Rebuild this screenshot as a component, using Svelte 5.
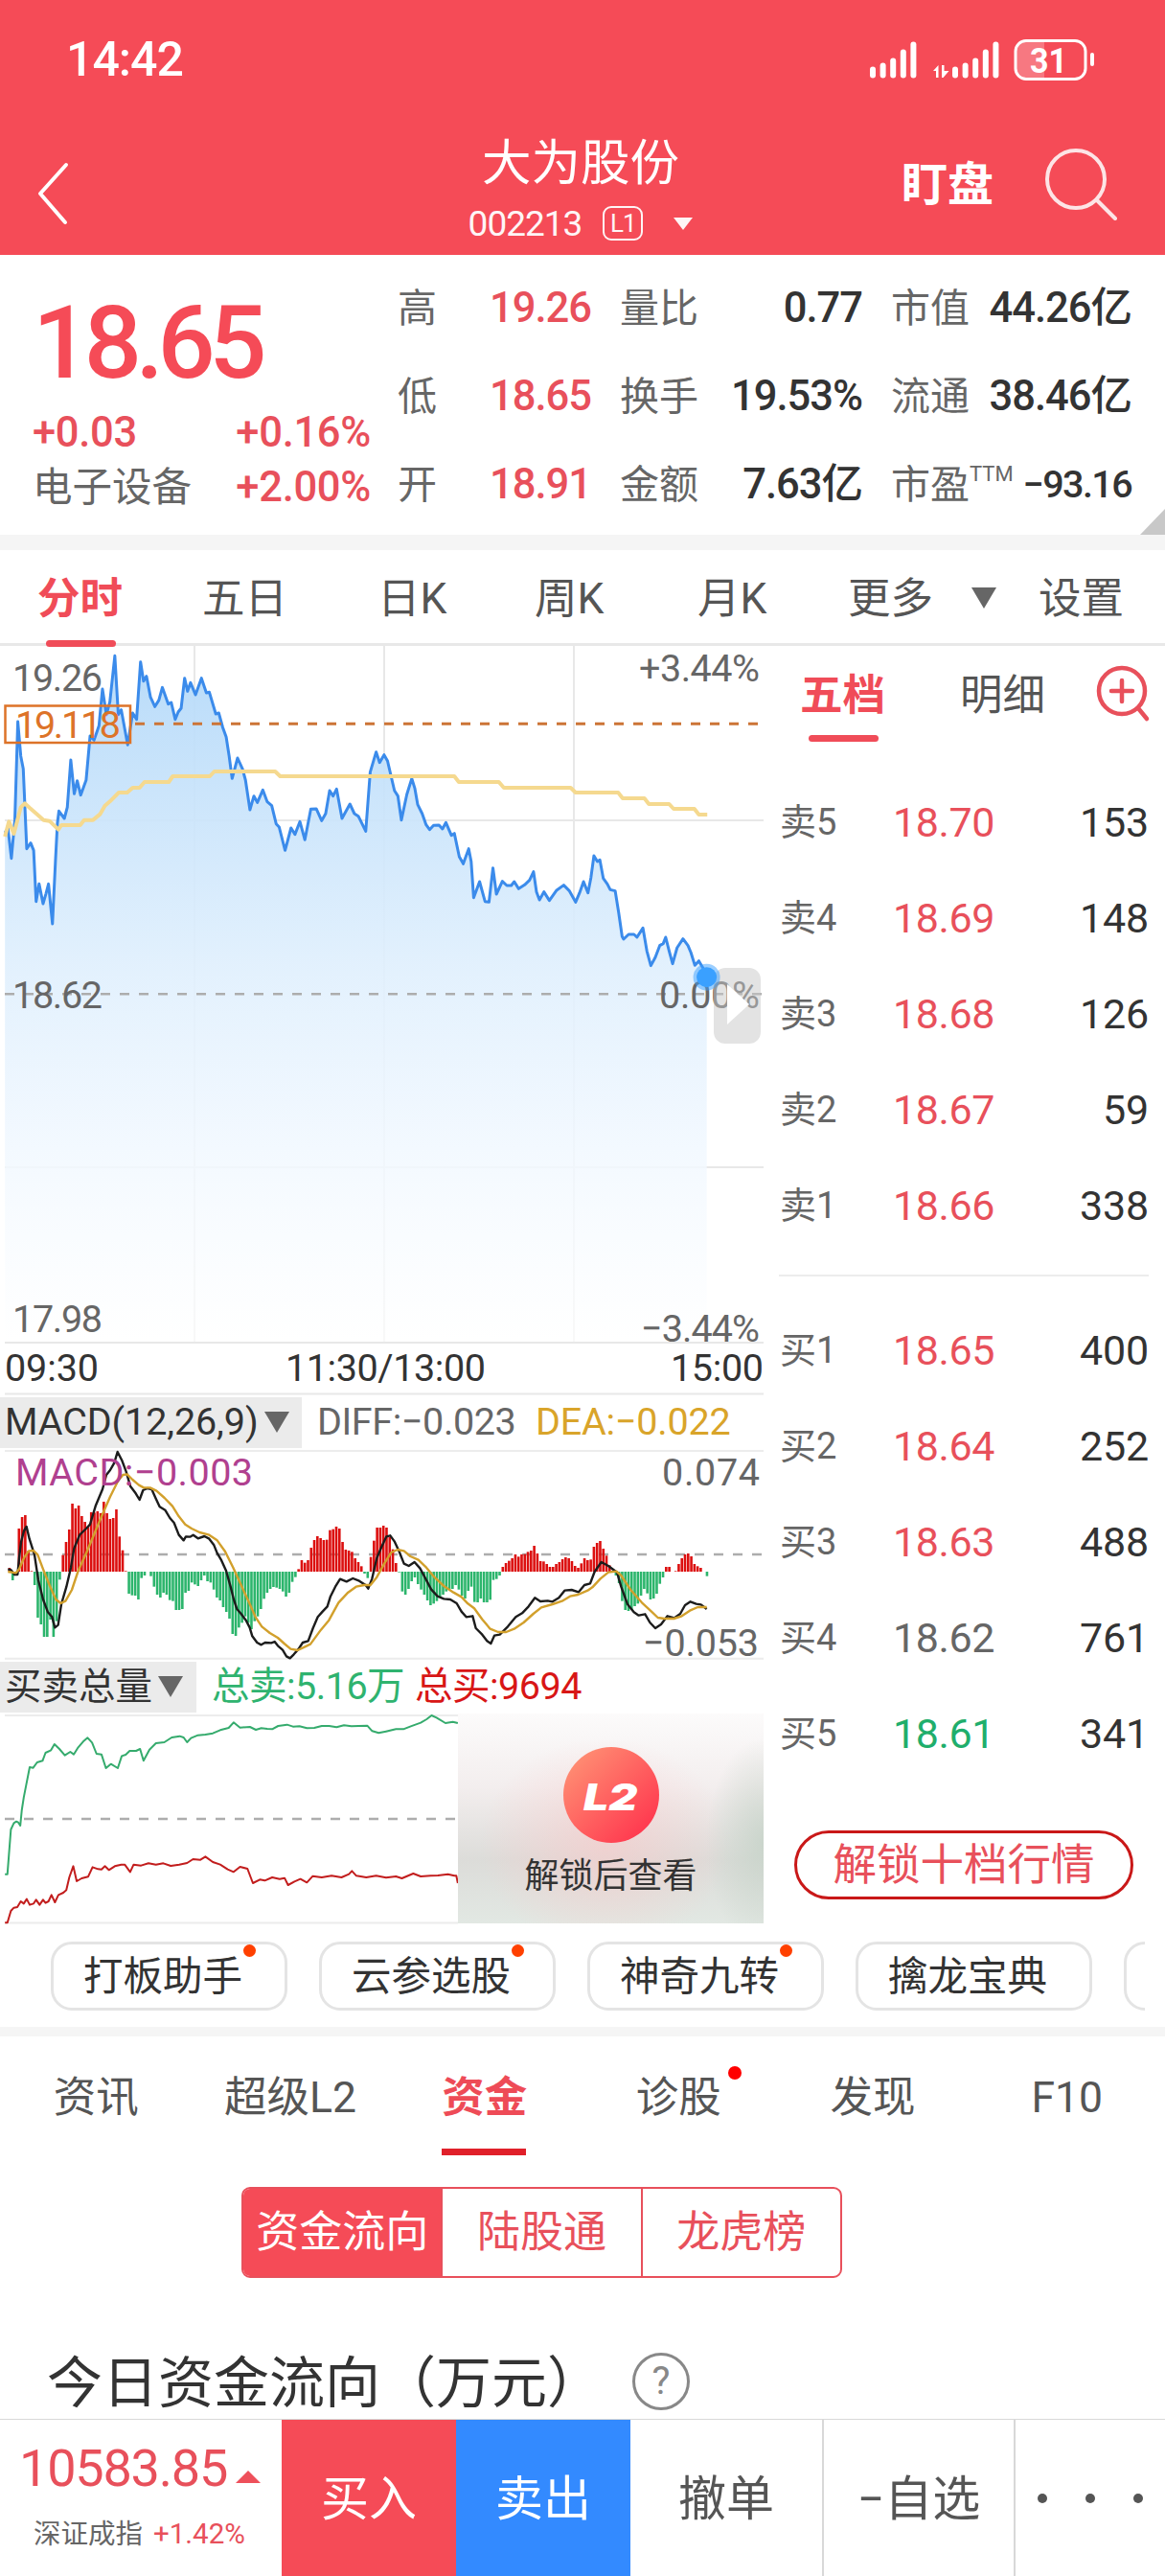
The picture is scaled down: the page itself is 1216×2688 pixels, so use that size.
<script>
    const stats = [
        { label: '高', value: '19.26', up: true },
        { label: '量比', value: '0.77' },
        { label: '市值', value: '44.26亿' },
        { label: '低', value: '18.65', up: true },
        { label: '换手', value: '19.53%' },
        { label: '流通', value: '38.46亿' },
        { label: '开', value: '18.91', up: true },
        { label: '金额', value: '7.63亿' },
        { label: '市盈', sup: 'TTM', value: '−93.16' }
    ];

    const periods = ['五日', '日K', '周K', '月K'];

    const asks = [
        { label: '卖5', price: '18.70', volume: 153 },
        { label: '卖4', price: '18.69', volume: 148 },
        { label: '卖3', price: '18.68', volume: 126 },
        { label: '卖2', price: '18.67', volume: 59 },
        { label: '卖1', price: '18.66', volume: 338 }
    ];
    const bids = [
        { label: '买1', price: '18.65', volume: 400 },
        { label: '买2', price: '18.64', volume: 252 },
        { label: '买3', price: '18.63', volume: 488 },
        { label: '买4', price: '18.62', volume: 761 },
        { label: '买5', price: '18.61', volume: 341 }
    ];
    const prevClose = 18.62;

    const tools = [
        { name: '打板助手', dot: true },
        { name: '云参选股', dot: true },
        { name: '神奇九转', dot: true },
        { name: '擒龙宝典', dot: false }
    ];

    const infoTabs = ['资讯', '超级L2', '资金', '诊股', '发现', 'F10'];
    const flowTabs = ['资金流向', '陆股通', '龙虎榜'];

    let infoTab = $state('资金');
    let flowTab = $state('资金流向');

    // intraday price, chart units
    const price = '10,930 16,915 23,1010 30,890 36,582 42,690 47,730 54,980 62,962 68,985 73,1145 79,1090 87,1152 93,1120 98,1090 106,1215 112,1020 116,900 119,862 130,885 136,850 143,702 150,808 156,767 163,812 174,765 182,627 190,640 200,595 207,480 215,560 222,520 232,376 239,560 245,545 258,655 268,555 276,575 284,395 290,455 296,440 304,505 313,535 321,515 328,475 340,527 346,522 354,575 360,552 366,540 373,446 379,487 385,460 395,498 407,446 417,492 423,490 436,558 442,555 450,600 457,630 463,690 469,760 480,696 490,730 496,765 505,858 513,815 520,835 531,796 540,833 549,845 558,902 564,912 576,985 588,915 596,935 606,895 616,952 628,856 639,855 650,892 658,870 666,798 673,815 680,793 691,885 707,840 716,870 724,878 739,925 748,740 760,677 767,710 776,686 783,705 797,798 804,815 811,890 822,810 832,760 838,790 844,842 853,870 861,905 868,920 876,907 887,906 894,918 901,898 912,938 918,932 928,1005 936,1027 947,980 952,1020 957,1133 969,1083 980,1145 988,1147 996,1040 1003,1122 1015,1082 1024,1095 1033,1095 1039,1083 1048,1105 1060,1093 1070,1078 1078,1052 1084,1115 1090,1140 1099,1115 1110,1142 1124,1111 1139,1094 1150,1111 1163,1147 1171,1118 1179,1083 1188,1118 1194,1070 1200,1002 1207,1020 1212,1015 1219,1073 1227,1090 1233,1108 1243,1112 1250,1180 1257,1255 1260,1263 1270,1248 1281,1248 1287,1257 1299,1228 1307,1300 1315,1346 1324,1320 1333,1283 1340,1277 1345,1257 1352,1300 1359,1340 1368,1290 1380,1262 1390,1283 1396,1305 1404,1345 1412,1331 1420,1352 1428,1382';
    const average = '10,942 18,895 28,933 42,850 50,838 60,852 75,872 88,890 100,893 118,920 124,906 162,906 170,890 188,890 202,872 212,845 222,832 240,804 257,804 268,789 282,789 292,771 341,771 349,753 424,753 433,738 556,738 566,753 918,753 927,771 1008,771 1018,789 1153,789 1163,804 1249,804 1258,822 1302,822 1311,840 1352,840 1361,855 1403,855 1412,873 1429,873';

    const macd = [
        12, -27, 0, 135, 171, 177, 65, 2, -42, -144, -165, -204, -204, -150, -204, -155, -25, 52, 93, 132,
        213, 198, 207, 174, 156, 140, 186, 185, 189, 183, 219, 183, 165, 168, 195, 110, 67, 2, -69, -74,
        -75, -87, -20, -12, 0, -14, -47, -72, -81, -66, -72, -89, -92, -120, -120, -117, -66, -60, -34, -40,
        -45, -27, -12, -30, -34, -56, -81, -90, -111, -126, -147, -195, -201, -175, -160, -140, -160, -180, -155, -140,
        -117, -85, -66, -54, -48, -50, -54, -62, -78, -66, -32, -17, 8, 36, 28, 36, 75, 99, 111, 105,
        99, 100, 130, 133, 141, 135, 93, 69, 66, 62, 42, 30, 17, -6, -20, 46, 97, 138, 138, 144,
        138, 108, 70, 27, -2, -62, -72, -54, -30, -18, -39, -56, -72, -90, -105, -100, -92, -80, -72, -62,
        -54, -54, -42, -56, -75, -84, -60, -47, -95, -96, -84, -96, -96, -88, -26, -23, -12, 15, 27, 34,
        42, 54, 47, 54, 55, 62, 66, 81, 57, 33, 32, 24, 15, 15, 24, 30, 39, 45, 42, 33,
        18, 12, 26, 42, 36, 38, 78, 90, 96, 72, 50, 20, 3, -12, -36, -92, -120, -123, -120, -108,
        -100, -75, -54, -68, -87, -84, -69, -38, -18, 15, 15, 0, 2, 24, 42, 54, 57, 48, 24, 17,
        12, 0, -14
    ];
    const barStep = 2184 / (macd.length - 1);

    const diff = '25,595 35,598 45,612 55,612 60,560 66,510 75,475 83,462 92,500 108,550 120,630 135,690 150,730 163,745 172,778 182,770 192,705 208,650 222,590 232,530 250,487 270,468 282,455 300,395 321,345 333,300 345,285 358,262 368,228 382,255 395,290 408,335 425,358 437,378 448,348 462,342 475,345 487,372 500,400 517,410 532,435 545,450 560,488 575,505 582,493 595,494 605,488 620,499 640,492 655,500 670,520 680,545 692,565 708,600 722,650 732,690 742,720 755,735 770,755 782,778 790,805 805,825 818,832 830,825 850,826 860,822 870,835 885,848 897,868 908,874 920,862 935,845 948,825 965,820 980,780 995,745 1010,728 1025,712 1035,680 1050,650 1065,626 1085,634 1105,624 1125,632 1145,645 1153,656 1165,625 1180,560 1195,525 1210,493 1222,490 1235,508 1250,540 1265,578 1280,585 1298,573 1315,592 1330,620 1350,658 1370,680 1390,688 1410,690 1430,702 1445,728 1460,745 1480,742 1490,780 1510,800 1525,820 1537,828 1548,803 1565,800 1590,775 1615,745 1635,733 1655,712 1675,685 1692,696 1715,694 1730,697 1750,685 1768,662 1790,660 1812,667 1830,645 1848,640 1862,603 1883,573 1905,585 1932,605 1945,650 1965,705 1985,730 2000,740 2020,736 2035,762 2052,780 2070,768 2090,742 2112,748 2130,735 2145,708 2162,697 2180,704 2195,706 2213,720';
    const dea = '25,603 50,607 60,595 75,560 90,538 105,537 118,550 135,595 155,645 175,690 190,702 205,695 225,660 245,600 270,545 295,485 320,425 345,368 370,318 385,300 398,298 415,315 435,332 450,340 470,340 490,350 515,372 540,398 560,430 580,455 600,468 625,480 655,488 680,505 705,540 730,590 755,645 780,700 800,745 820,775 845,795 870,810 890,828 910,845 932,849 955,838 972,830 1005,785 1030,755 1060,700 1090,668 1115,650 1140,645 1160,645 1180,620 1205,575 1225,543 1245,534 1265,538 1285,555 1310,566 1335,590 1360,620 1390,648 1420,668 1445,682 1465,703 1485,718 1510,752 1535,782 1560,792 1585,792 1610,782 1640,762 1670,735 1695,715 1730,705 1760,695 1785,680 1810,675 1840,662 1855,652 1880,625 1905,605 1930,602 1945,615 1975,660 2010,700 2040,728 2060,747 2080,750 2110,750 2135,742 2160,725 2185,714 2213,714';

    const sellTotal = '10,680 15,680 18,620 22,540 28,520 33,515 37,518 41,528 44,480 48,440 53,400 60,345 67,347 75,330 86,325 92,300 103,292 110,273 120,288 131,308 142,297 149,305 158,283 168,265 177,253 186,268 195,303 205,305 214,348 224,335 238,348 246,310 254,306 262,294 275,294 283,288 290,325 302,290 315,270 332,267 347,252 363,248 371,252 378,267 386,254 400,245 415,243 430,239 445,229 462,222 472,205 485,221 505,219 517,228 528,223 540,225 550,226 562,216 580,212 592,218 605,217 620,223 635,222 650,216 665,216 680,220 695,214 710,217 725,216 742,215 752,232 765,238 780,233 800,226 815,226 830,217 850,206 862,195 872,183 882,190 900,207 915,203 925,207';
    const buyTotal = '10,832 15,832 22,795 28,785 35,783 42,765 48,772 54,758 60,776 68,772 73,760 80,776 87,760 92,770 98,765 104,745 111,768 118,745 128,738 134,730 140,690 148,655 155,702 165,693 178,688 187,658 198,664 205,665 212,655 220,667 232,655 245,650 252,650 263,673 270,650 285,653 300,646 315,650 330,646 345,654 362,650 378,645 390,633 405,635 415,625 430,642 445,650 460,665 472,673 485,657 500,663 511,708 525,697 535,700 550,690 565,695 575,692 582,714 595,703 607,695 620,706 632,686 650,690 670,685 690,690 705,680 711,670 720,685 740,690 760,685 780,691 800,687 812,693 835,678 850,687 870,685 885,684 905,680 918,685 922,685 925,708';

    function trend(value) {
        const n = Number(value);
        if (n === prevClose) return 'flat';
        return n > prevClose ? 'up' : 'down';
    }
</script>

{#snippet level(row)}
    <div class="level">
        <span class="level-name">{row.label}</span>
        <span class="level-price {trend(row.price)}">{row.price}</span>
        <span class="level-volume">{row.volume}</span>
    </div>
{/snippet}

{#snippet caret()}
    <svg class="caret" width="26" height="22" viewBox="0 0 26 22"><path d="M0 0H26L13 22Z" fill="#666" /></svg>
{/snippet}

<div class="screen">
    <header>
        <div class="status-bar">
            <span class="clock">14:42</span>
            <svg width="236" height="46" viewBox="907 38 236 46">
                <g fill="#fff">
                    {#each [12, 16, 21, 30, 38] as h, i}
                        <rect x={908 + i * 10.6} y={80.5 - h} width="6" height={h} rx="3" />
                        <rect x={994 + i * 10.6} y={80.5 - h} width="6" height={h} rx="3" />
                    {/each}
                    <path d="M974 73L979.5 67V80H977V73ZM983 67H985.5V73H990.5L984.5 80H983Z" />
                    <rect x="1138" y="54" width="4" height="14" rx="2" />
                    <path d="M1070 42H1090V81H1070Q1060 81 1060 71V52Q1060 42 1070 42Z" opacity=".25" />
                </g>
                <rect x="1060" y="41.5" width="73" height="40" rx="11" fill="none" stroke="#fff" stroke-width="3" />
                <text x="1075" y="75" textLength="39" lengthAdjust="spacingAndGlyphs" class="battery">31</text>
            </svg>
        </div>
        <div class="title-bar">
            <svg class="back" width="34" height="66" viewBox="0 0 34 66"><path d="M31 3L4 33L30 63" fill="none" stroke="#fff" stroke-width="4" stroke-linecap="round" stroke-linejoin="round" /></svg>
            <div class="title">
                <h1>大为股份</h1>
                <div class="code">
                    <span>002213</span>
                    <em>L1</em>
                    <svg width="20" height="13" viewBox="0 0 20 13"><path d="M0 0H20L10 13Z" fill="#fff" /></svg>
                </div>
            </div>
            <div class="actions">
                <b>盯盘</b>
                <svg width="78" height="78" viewBox="0 0 78 78" fill="none" stroke="#fff" stroke-width="4" stroke-linecap="round" opacity=".85">
                    <circle cx="34" cy="34" r="30" />
                    <path d="M56 56L75 75" />
                </svg>
            </div>
        </div>
    </header>

    <section class="quote">
        <div class="quote-main">
            <div class="last">18.65</div>
            <div class="quote-row"><span class="up">+0.03</span><span class="up">+0.16%</span></div>
            <div class="quote-row"><span class="sector">电子设备</span><span class="up">+2.00%</span></div>
        </div>
        <div class="stats">
            {#each stats as s}
                <div class="stat" class:small={s.sup}>
                    <span class="stat-label">{s.label}{#if s.sup}<sup>{s.sup}</sup>{/if}</span>
                    <span class="stat-value" class:up={s.up}>{s.value}</span>
                </div>
            {/each}
        </div>
        <svg class="corner" width="26" height="27" viewBox="0 0 26 27"><path d="M26 0V27H0Z" fill="#c8c8c8" /></svg>
    </section>

    <nav class="periods">
        <span class="active">分时</span>
        {#each periods as p}
            <span>{p}</span>
        {/each}
        <span class="more">更多{@render caret()}</span>
        <span>设置</span>
    </nav>

    <div class="board">
        <div class="charts">
            <svg width="797" height="782" viewBox="0 675 797 782">
                <defs>
                    <linearGradient id="area" x1="0" y1="375" x2="0" y2="2523" gradientUnits="userSpaceOnUse">
                        <stop offset="0" stop-color="#b4d9f9" stop-opacity=".94" />
                        <stop offset=".45" stop-color="#dfeffd" stop-opacity=".9" />
                        <stop offset=".72" stop-color="#f1f8ff" stop-opacity=".85" />
                        <stop offset="1" stop-color="#fff" stop-opacity=".7" />
                    </linearGradient>
                </defs>
                <g stroke="#e8e8e8" stroke-width="2">
                    <path d="M203 675V1401M401 675V1401M599 675V1401M5 857H797M5 1219H797" />
                    <path d="M5 1402H797M5 1455.5H797" />
                </g>
                <g transform="translate(0 560) scale(.5166 .33333)">
                    <polygon points="{price} 1428,2523 10,2523" fill="url(#area)" />
                    <polyline points={price} class="line" stroke="#3b8beb" stroke-width="3" />
                    <polyline points={average} class="line" stroke="#f5d98f" stroke-width="4" />
                </g>
                <path d="M5 1038.3H795" stroke="#adadad" stroke-width="2.5" stroke-dasharray="10 10" />
                <path d="M141 756.3H792" stroke="#cc7436" stroke-width="3" stroke-dasharray="10 10" />
                <rect x="5.5" y="737.5" width="130.5" height="38.5" fill="none" stroke="#dd7328" stroke-width="2.5" />
                <g class="axis">
                    <text x="13" y="722" textLength="94">19.26</text>
                    <text x="667" y="712" textLength="126">+3.44%</text>
                    <text x="16" y="771" textLength="110" class="orange">19.118</text>
                    <text x="13" y="1052.7" textLength="94">18.62</text>
                    <text x="688" y="1052.7" textLength="105">0.00%</text>
                    <text x="13" y="1390.7" textLength="94">17.98</text>
                    <text x="669" y="1400.7" textLength="124">−3.44%</text>
                    <text x="5" y="1441.7" textLength="98" class="dark">09:30</text>
                    <text x="298" y="1441.7" textLength="209" class="dark">11:30/13:00</text>
                    <text x="700" y="1441.7" textLength="97" class="dark">15:00</text>
                </g>
                <rect x="745" y="1011" width="49" height="79" rx="12" fill="#c8c8c8" opacity=".5" />
                <path d="M759 1028V1070L782 1049Z" fill="#fff" />
                <circle cx="737.6" cy="1020.7" r="14" fill="#3aa0ff" opacity=".5" />
                <circle cx="737.6" cy="1020.7" r="10.5" fill="#3aa0ff" />
            </svg>

            <div class="indicator">
                <span class="indicator-name macd-name">MACD(12,26,9){@render caret()}</span>
                <span class="diff">DIFF:−0.023</span>
                <span class="dea">DEA:−0.022</span>
            </div>
            <svg width="797" height="220" viewBox="0 1513 797 220">
                <path d="M5 1515H797M5 1731.7H797" stroke="#ececec" stroke-width="2" />
                <path d="M5 1623H797" stroke="#adadad" stroke-width="2.5" stroke-dasharray="10 10" />
                <g transform="translate(0 1440) scale(.33333)">
                    {#each macd as v, i}
                        <rect x={26 + i * barStep} y={v > 0 ? 603 - v : 603} width="7.8" height={Math.abs(v)} fill={v > 0 ? '#dc0f0f' : '#2cb56c'} />
                    {/each}
                    <polyline points={diff} class="line" stroke="#1c1c1c" stroke-width="2.4" />
                    <polyline points={dea} class="line" stroke="#d2a02c" stroke-width="2.4" />
                </g>
                <g class="axis">
                    <text x="16" y="1550.7" textLength="248" class="purple">MACD:−0.003</text>
                    <text x="691" y="1551" textLength="102">0.074</text>
                    <text x="671" y="1729" textLength="121">−0.053</text>
                </g>
            </svg>

            <div class="indicator">
                <span class="indicator-name volume-name">买卖总量{@render caret()}</span>
                <span class="sell-total">总卖:5.16万</span>
                <span class="buy-total">总买:9694</span>
            </div>
            <div class="volume">
                <svg width="478" height="220" viewBox="0 1789 478 220">
                    <path d="M5 1791H478M5 2007.5H478" stroke="#ececec" stroke-width="2" />
                    <path d="M5 1899H478" stroke="#adadad" stroke-width="2.5" stroke-dasharray="10 10" />
                    <g transform="translate(0 1730) scale(.5166 .33333)">
                        <polyline points={sellTotal} class="line" stroke="#35ab6d" stroke-width="2" />
                        <polyline points={buyTotal} class="line" stroke="#c21d1d" stroke-width="2" />
                    </g>
                </svg>
                <div class="locked">
                    <div class="badge"><i>L2</i></div>
                    <span>解锁后查看</span>
                </div>
            </div>
        </div>

        <aside>
            <div class="book-tabs">
                <span class="active">五档</span>
                <span>明细</span>
                <svg width="58" height="62" viewBox="0 0 58 62" fill="none" stroke="#e8505b" stroke-width="4.5" stroke-linecap="round">
                    <circle cx="28" cy="28" r="24" />
                    <path d="M17 28H39M28 17V39M45 46L54 57" />
                </svg>
            </div>
            <div class="levels asks">
                {#each asks as row}
                    {@render level(row)}
                {/each}
            </div>
            <div class="levels bids">
                {#each bids as row}
                    {@render level(row)}
                {/each}
            </div>
            <button class="unlock">解锁十档行情</button>
        </aside>
    </div>

    <div class="tools">
        {#each tools as tool}
            <div class="tool">{tool.name}{#if tool.dot}<span class="dot"></span>{/if}</div>
        {/each}
        <div class="tool"></div>
    </div>

    <nav class="info-tabs">
        {#each infoTabs as tab}
            <button class:active={infoTab === tab} onclick={() => (infoTab = tab)}>
                <span>{tab}{#if tab === '诊股'}<span class="dot"></span>{/if}</span>
            </button>
        {/each}
    </nav>

    <div class="flow-tabs">
        {#each flowTabs as tab}
            <button class:active={flowTab === tab} onclick={() => (flowTab = tab)}>{tab}</button>
        {/each}
    </div>

    <div class="flow-title">
        <h2>今日资金流向（万元）</h2>
        <span class="help">?</span>
    </div>

    <footer>
        <div class="index">
            <div class="index-value">10583.85<svg width="26" height="13" viewBox="0 0 26 13"><path d="M13 0L26 13H0Z" fill="#ee505b" /></svg></div>
            <div class="index-name">深证成指<span class="up">+1.42%</span></div>
        </div>
        <div class="buy">买入</div>
        <div class="sell">卖出</div>
        <div class="plain">撤单</div>
        <div class="plain">−自选</div>
        <div class="plain dots"><i></i><i></i><i></i></div>
    </footer>
</div>

<style>
    :global(body) {
        margin: 0;
        background: #fff;
    }

    .screen {
        width: 1216px;
        height: 2688px;
        overflow: hidden;
        background: #fff;
        color: #333;
        font-family: Roboto, "Noto Sans CJK SC", sans-serif;
        font-size: 42px;
        display: flex;
        flex-direction: column;
    }

    svg {
        display: block;
        flex: none;
        overflow: visible;
    }

    button {
        font: inherit;
        color: inherit;
        background: none;
        border: none;
        padding: 0;
    }

    h1, h2 {
        margin: 0;
        font-weight: 400;
    }

    .up {
        color: #e8505b;
    }

    .down {
        color: #1fae6c;
    }

    .flat {
        color: #666;
    }

    .dot {
        position: absolute;
        width: 13px;
        height: 13px;
        border-radius: 50%;
        background: #ff4000;
    }

    /* header */
    header {
        height: 266px;
        background: #f54b57;
        color: #fff;
    }

    .status-bar {
        height: 124px;
        padding: 0 73px 0 69px;
        display: flex;
        justify-content: space-between;
        align-items: center;
    }

    .clock {
        font-size: 50px;
        font-weight: 500;
        letter-spacing: -1px;
    }

    .battery {
        font-size: 36px;
        font-weight: 700;
        fill: #fff;
    }

    .title-bar {
        height: 142px;
        display: grid;
        grid-template-columns: 1fr auto 1fr;
    }

    .back {
        margin: 45px 0 0 38px;
    }

    .title {
        padding: 15px 4px 0 0;
        text-align: center;
    }

    h1 {
        font-size: 51.5px;
        line-height: 64px;
    }

    .code {
        height: 36px;
        margin-top: 12px;
        display: flex;
        align-items: center;
        font-size: 37px;
        letter-spacing: -1px;
        opacity: 0.95;
    }

    .code em {
        margin: 0 32px 0 22px;
        width: 38px;
        height: 32px;
        border: 2px solid #fff;
        border-radius: 9px;
        font-size: 26px;
        line-height: 32px;
        font-style: normal;
    }

    .actions {
        display: flex;
        justify-content: flex-end;
        padding: 29px 49px 0 0;
    }

    .actions b {
        font-size: 48px;
        line-height: 79px;
        margin-right: 52px;
        font-weight: 700;
    }

    /* quote */
    .quote {
        position: relative;
        height: 293px;
        border-bottom: 16px solid #f5f5f5;
        display: flex;
        font-weight: 500;
        letter-spacing: -1px;
    }

    .quote-main {
        width: 353px;
        padding: 42px 28px 0 34px;
    }

    .last {
        height: 115px;
        color: #f54b57;
        font-size: 106px;
        line-height: 101px;
        letter-spacing: -6.5px;
    }

    .quote-row {
        display: flex;
        justify-content: space-between;
        line-height: 57px;
        font-size: 43.5px;
        letter-spacing: -0.3px;
    }

    .sector {
        color: #666;
        font-weight: 400;
        font-size: 41.5px;
        letter-spacing: 0;
    }

    .stats {
        margin-top: 10px;
        display: grid;
        grid-template-columns: 202px 253px 251px;
        grid-auto-rows: 92px;
        column-gap: 30px;
    }

    .stat {
        display: flex;
        justify-content: space-between;
        line-height: 92px;
    }

    .stat-label {
        color: #666;
        font-weight: 400;
        font-size: 41px;
        letter-spacing: 0;
        white-space: nowrap;
    }

    .stat-value {
        font-size: 43.5px;
        white-space: nowrap;
    }

    .stat.small .stat-value {
        font-size: 39.5px;
        letter-spacing: -1.6px;
    }

    sup {
        font-size: 22px;
        line-height: 0;
        vertical-align: 18px;
    }

    .corner {
        position: absolute;
        right: 0;
        bottom: 0;
    }

    /* period tabs */
    .periods {
        box-sizing: border-box;
        height: 100px;
        padding-left: 39px;
        border-bottom: 3px solid #e8e8e8;
        display: grid;
        grid-template-columns: 172px 183px 164px 170px 157px 199px auto;
        justify-items: start;
        font-size: 44.5px;
        line-height: 103px;
        color: #555;
    }

    .periods .more {
        display: flex;
        align-items: center;
        gap: 40px;
    }

    .more .caret {
        margin-top: -3px;
    }

    .active {
        position: relative;
        color: #f04c58;
        font-weight: 700;
    }

    .periods .active::after,
    .book-tabs .active::after {
        content: "";
        position: absolute;
        left: 9px;
        right: 7px;
        bottom: 2px;
        height: 7px;
        border-radius: 4px;
        background: #f04c58;
    }

    /* charts */
    .board {
        display: flex;
        height: 1334px;
    }

    .charts {
        width: 797px;
    }

    .line {
        fill: none;
        stroke-linejoin: round;
        vector-effect: non-scaling-stroke;
    }

    .axis {
        font-size: 39.5px;
        fill: #666;
    }

    .axis .orange {
        fill: #dd7328;
    }

    .axis .dark {
        fill: #333;
    }

    .axis .purple {
        fill: #b0408f;
    }

    .indicator {
        height: 56px;
        display: flex;
        align-items: center;
        font-size: 39.5px;
        line-height: 58px;
        white-space: nowrap;
    }

    .indicator-name {
        box-sizing: border-box;
        height: 53px;
        padding-left: 5px;
        background: #ebebeb;
        display: flex;
        align-items: center;
        gap: 6px;
    }

    .macd-name {
        width: 315px;
        letter-spacing: -0.1px;
    }

    .volume-name {
        width: 205px;
        font-size: 38.5px;
    }

    .diff {
        margin-left: 16px;
        color: #666;
        width: 228px;
        letter-spacing: -0.4px;
    }

    .dea {
        color: #d9a42a;
        letter-spacing: -0.2px;
    }

    .sell-total {
        margin-left: 16px;
        width: 212px;
        color: #2fb36f;
        letter-spacing: -0.5px;
    }

    .buy-total {
        color: #d81616;
        letter-spacing: -0.5px;
    }

    .volume {
        display: flex;
    }

    .locked {
        width: 319px;
        height: 219px;
        background:
            radial-gradient(ellipse 60px 110px at 100% 62%, rgba(200, 212, 202, 0.9), rgba(200, 212, 202, 0)),
            radial-gradient(ellipse 130px 110px at 48% 62%, rgba(250, 200, 200, 0.6), rgba(250, 200, 200, 0)),
            linear-gradient(#fcfbfb, #f3eeee 35%, #dcdcd9 70%, #e2e8e3);
        display: flex;
        flex-direction: column;
        align-items: center;
        font-size: 36px;
    }

    .badge {
        width: 100px;
        height: 100px;
        margin: 35px 0 10px;
        border-radius: 50%;
        background: linear-gradient(135deg, #ff9a78, #ff3b50 85%);
        color: #fff;
        font: italic 900 38px/104px Inter, sans-serif;
        text-align: center;
    }

    .badge i {
        display: inline-block;
        transform: scaleX(1.22);
    }

    .locked span {
        line-height: 50px;
    }

    /* order book */
    aside {
        width: 419px;
        display: flex;
        flex-direction: column;
    }

    .book-tabs {
        height: 99px;
        padding-left: 38px;
        display: grid;
        grid-template-columns: 167px 141px auto;
        justify-items: start;
        align-items: start;
        font-size: 44.5px;
        line-height: 105px;
        color: #555;
    }

    .book-tabs .active::after {
        bottom: 5px;
    }

    .book-tabs svg {
        margin-top: 19px;
    }

    .levels {
        margin-left: 16px;
        width: 386px;
        padding-bottom: 22px;
    }

    .asks {
        padding-top: 35px;
        border-bottom: 2px solid #ececec;
    }

    .bids {
        padding-top: 27px;
    }

    .level {
        display: flex;
        height: 100px;
        line-height: 101px;
        font-size: 43px;
    }

    .level-name {
        width: 118px;
        padding-left: 1px;
        color: #666;
        font-size: 38px;
    }

    .level-price {
        letter-spacing: -0.4px;
    }

    .level-volume {
        flex: 1;
        text-align: right;
        letter-spacing: -0.2px;
    }

    .unlock {
        margin: 29px 0 0 32px;
        width: 354px;
        height: 72px;
        border: 3px solid #c91818;
        border-radius: 36px;
        color: #e8505b;
        font-size: 45.5px;
        line-height: 68px;
    }

    /* tool pills */
    .tools {
        height: 89px;
        margin-right: 21px;
        padding: 18px 0 0 53px;
        display: flex;
        gap: 33px;
        overflow: hidden;
    }

    .tool {
        position: relative;
        box-sizing: border-box;
        flex: none;
        width: 247px;
        height: 72px;
        padding-left: 31px;
        border: 3px solid #e4e4e4;
        border-radius: 22px;
        font-size: 41.5px;
        line-height: 68px;
    }

    .tool .dot {
        left: 198px;
        top: 0;
    }

    /* info tabs */
    .info-tabs {
        height: 125px;
        border-top: 10px solid #f5f5f5;
        display: flex;
        font-size: 44.5px;
        color: #555;
    }

    .info-tabs button {
        flex: 1;
        height: 125px;
        line-height: 128px;
    }

    .info-tabs button span {
        position: relative;
        left: -1px;
    }

    .info-tabs button.active {
        color: #ee4b57;
    }

    .info-tabs button.active::after {
        content: "";
        position: absolute;
        left: 56px;
        width: 88px;
        bottom: 1px;
        height: 7px;
        background: #e0202a;
    }

    .info-tabs button .dot {
        position: absolute;
        left: 96px;
        top: -7px;
        width: 14px;
        height: 14px;
        background: #f00;
    }

    .flow-tabs {
        box-sizing: border-box;
        width: 627px;
        height: 95px;
        margin: 32px 0 0 252px;
        border: 2px solid #e8505b;
        border-radius: 9px;
        overflow: hidden;
        display: flex;
        color: #e8505b;
        font-size: 45px;
    }

    .flow-tabs button {
        flex: 1;
        line-height: 91px;
    }

    .flow-tabs button + button {
        border-left: 2px solid #e8505b;
    }

    .flow-tabs .active {
        background: #f54b57;
        color: #fff;
        font-weight: 400;
    }

    .flow-title {
        height: 147px;
        padding-left: 49px;
        display: flex;
    }

    h2 {
        margin-top: 69px;
        font-size: 58px;
        line-height: 82px;
    }

    .help {
        box-sizing: border-box;
        width: 60px;
        height: 60px;
        margin: 78px 0 0 31px;
        border: 3px solid #888;
        border-radius: 50%;
        color: #888;
        font-size: 40px;
        line-height: 54px;
        text-align: center;
    }

    /* bottom bar */
    footer {
        height: 163px;
        border-top: 1px solid #d8d8d8;
        display: flex;
        font-size: 50px;
        line-height: 167px;
        text-align: center;
    }

    .index {
        width: 294px;
        text-align: left;
    }

    .index-value {
        display: flex;
        align-items: flex-end;
        padding: 18px 0 0 20px;
        height: 66px;
        font-size: 54px;
        line-height: 66px;
        letter-spacing: -1.2px;
        color: #e8505b;
    }

    .index-value svg {
        margin: 0 0 18px 9px;
    }

    .index-name {
        padding: 16px 0 0 35px;
        font-size: 28.5px;
        line-height: 38px;
        color: #666;
        white-space: nowrap;
    }

    .index-name .up {
        margin-left: 11px;
        font-size: 29.5px;
    }

    .buy,
    .sell {
        width: 182px;
        background: #f54b57;
        color: #fff;
    }

    .sell {
        background: #338aff;
    }

    .plain {
        box-sizing: border-box;
        width: 200px;
        color: #555;
    }

    .plain + .plain {
        border-left: 2px solid #d8d8d8;
    }

    .dots {
        width: 158px;
        display: flex;
        justify-content: center;
        align-items: center;
        gap: 40px;
    }

    .dots i {
        width: 10px;
        height: 10px;
        border-radius: 50%;
        background: #555;
    }
</style>
